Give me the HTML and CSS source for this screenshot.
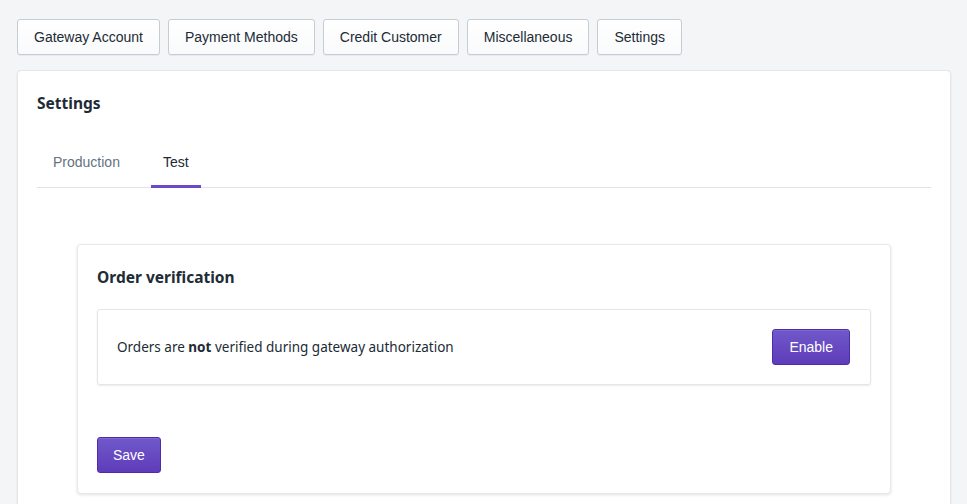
FILE: index.html
```html
<!DOCTYPE html>
<html>
<head>
<meta charset="utf-8">
<link rel="stylesheet" href="styles.css">
</head>
<body>
<nav class="topnav">
  <button class="btn">Gateway Account</button>
  <button class="btn">Payment Methods</button>
  <button class="btn">Credit Customer</button>
  <button class="btn">Miscellaneous</button>
  <button class="btn">Settings</button>
</nav>
<section class="card">
  <h2 class="card-title">Settings</h2>
  <div class="tabs">
    <div class="tab">Production</div>
    <div class="tab tab-active">Test</div>
  </div>
  <div class="content">
    <div class="panel">
      <h3 class="panel-title">Order verification</h3>
      <div class="row">
        <span class="row-text">Orders are <strong>not</strong> verified during gateway authorization</span>
        <button class="btn btn-primary">Enable</button>
      </div>
      <button class="btn btn-primary btn-save">Save</button>
    </div>
  </div>
</section>
</body>
</html>
```
FILE: styles.css
```css
* { box-sizing: border-box; }
html, body { margin: 0; padding: 0; }
body {
  background: #f4f5f7;
  font-family: "Liberation Sans", Arial, sans-serif;
  color: #212b36;
  padding: 19px 16px 0 17px;
  height: 504px;
  overflow: hidden;
}
.topnav {
  display: flex;
  gap: 8px;
}
.btn {
  height: 36px;
  padding: 0 16px;
  font-family: "Liberation Sans", Arial, sans-serif;
  font-size: 14px;
  color: #212b36;
  background: linear-gradient(#fff, #f9fafb);
  border: 1px solid #c4cdd5;
  border-radius: 3px;
  box-shadow: 0 1px 0 rgba(22,29,37,.05);
  cursor: pointer;
}
.card {
  margin-top: 15px;
  background: #fff;
  border: 1px solid #e4e6e9;
  border-radius: 4px;
  box-shadow: 0 1px 2px rgba(63,63,68,.12);
  padding: 20px 19px 60px 19px;
}
.card-title {
  margin: 0;
  font-family: "Noto Sans", "Open Sans", sans-serif;
  font-size: 15.5px;
  font-weight: 700;
  line-height: 24px;
  color: #212b36;
}
.tabs {
  display: flex;
  gap: 19px;
  margin-top: 21px;
  padding-left: 4px;
  border-bottom: 1px solid #e1e3e5;
}
.tab {
  font-size: 14px;
  padding: 0 12px;
  height: 52px;
  line-height: 52px;
  color: #637381;
  border-bottom: 3px solid transparent;
  margin-bottom: -1px;
}
.tab-active {
  color: #212b36;
  border-bottom-color: #6b4bc5;
}
.content {
  padding: 56px 40px 0;
}
.panel {
  background: #fff;
  border: 1px solid #e7e8ea;
  border-radius: 4px;
  box-shadow: 0 1px 3px rgba(63,63,68,.15);
  padding: 20px 19px 20px 19px;
}
.panel-title {
  margin: 0;
  font-family: "Noto Sans", "Open Sans", sans-serif;
  font-size: 15.5px;
  font-weight: 700;
  line-height: 24px;
  color: #212b36;
}
.row {
  margin-top: 20px;
  display: flex;
  align-items: center;
  justify-content: space-between;
  border: 1px solid #e4e6e9;
  border-radius: 3px;
  box-shadow: 0 1px 2px rgba(63,63,68,.1);
  padding: 19px 20px 19px 19px;
}
.row-text {
  font-family: "Noto Sans", "Open Sans", sans-serif;
  font-size: 13.5px;
  color: #212b36;
}
.row-text strong { font-weight: 700; }
.btn-primary {
  color: #fff;
  background: linear-gradient(#7058cb, #5f3cba);
  border-color: #4f2ba8;
  box-shadow: inset 0 1px 0 rgba(255,255,255,.1);
  padding: 0 16px;
}
.btn-save {
  margin-top: 52px;
  display: block;
  padding: 0 15px;
}
```
